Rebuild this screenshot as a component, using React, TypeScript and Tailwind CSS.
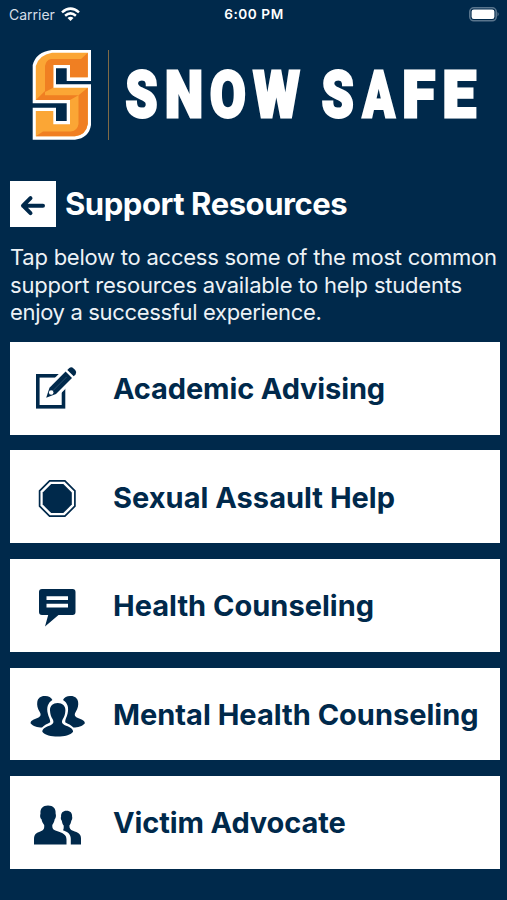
import React from 'react';

interface Resource {
  title: string;
  tracking: string;
  icon: React.ReactNode;
}

const NoteIcon = () => (
  <svg viewBox="0 1.5 70 50" className="h-[50px] w-[70px]">
    <rect x="17.8" y="13.3" width="25.7" height="31" fill="none" stroke="#00294b" strokeWidth="3.6" />
    <path d="M26 35 29 24 48 5 56 13 37 32Z" fill="#fff" stroke="#fff" strokeWidth="4" />
    <path d="M26.2 35.2 29.5 25.2 45.6 9.1 52 15.5 36 31.6Z" fill="#00294b" />
    <path d="M47.3 7.4 49.3 5.4Q51.6 3.9 53.6 6L55.2 7.6Q57.2 9.8 55.6 11.9L53.7 13.8Z" fill="#00294b" />
    <path d="M32.6 28.5 46.6 14.5" stroke="#335573" strokeWidth="0.8" />
    <circle cx="31.2" cy="30" r="2.3" fill="#fff" />
  </svg>
);

const OctagonIcon = () => (
  <svg viewBox="0 0 70 50" className="h-[50px] w-[70px]">
    <path d="M29.6 8.9H44.9L54.9 18.9V34.2L44.9 44.2H29.6L19.6 34.2V18.9Z" fill="#fff" stroke="#00294b" strokeWidth="1.7" />
    <path d="M31.2 12H43.3L51.8 20.5V32.6L43.3 41.1H31.2L22.7 32.6V20.5Z" fill="#00294b" />
  </svg>
);

const CommentIcon = () => (
  <svg viewBox="0 -.5 70 50" className="h-[50px] w-[70px]">
    <path d="M22 7.5H52.5Q55.5 7.5 55.5 10.5V30.5Q55.5 33.5 52.5 33.5H38.5L25 45 28.2 33.5H22Q19 33.5 19 30.5V10.5Q19 7.5 22 7.5Z" fill="#00294b" />
    <path d="M26.5 16.7H48M26.5 24.2H48" stroke="#fff" strokeWidth="3.8" />
  </svg>
);

const GroupIcon = () => (
  <svg viewBox="0 -2 70 50" className="h-[50px] w-[70px]">
    <path d="M24.5 5C28 4.7 31 6 32.4 9C27.5 12 26.5 17 27.8 22.5C28.5 26 30.4 28 30.2 31.2C27.5 33 24 33.8 22 36.6C17.5 36.3 13 35.3 10.5 32.2C10.8 28.8 15 28.5 18 26.8C21 25.3 21.2 23.5 19.6 20.8C17.5 17.4 16.8 14 17.3 10.8C18 7.2 20.5 5 24.5 5Z" fill="#00294b" />
    <path d="M50.9 5C47.4 4.7 44.4 6 43 9C47.9 12 48.9 17 47.6 22.5C46.9 26 45 28 45.2 31.2C47.9 33 51.4 33.8 53.4 36.6C57.9 36.3 62.4 35.3 64.9 32.2C64.6 28.8 60.4 28.5 57.4 26.8C54.4 25.3 54.2 23.5 55.8 20.8C57.9 17.4 58.6 14 58.1 10.8C57.4 7.2 54.9 5 50.9 5Z" fill="#00294b" />
    <path d="M37.7 12C33 12 29.7 15 30 19.5C30.2 23 30.9 25.5 32.7 28.2C34 30.5 33.7 32.5 31 34C26.5 36 22.3 37 22.3 40.8C25 44.4 31 45.5 37.7 45.5C44.4 45.5 50.4 44.4 53.1 40.8C53.1 37 48.9 36 44.4 34C41.7 32.5 41.4 30.5 42.7 28.2C44.5 25.5 45.2 23 45.4 19.5C45.7 15 42.4 12 37.7 12Z" fill="#00294b" />
  </svg>
);

const PairIcon = () => (
  <svg viewBox="0 -1.5 70 50" className="h-[50px] w-[70px]">
    <path d="M46.5 11.2C50.4 11.2 52.3 13.4 52.1 17C52.6 18.5 52 20.5 51.3 21.2C51 23.5 50 25 49.4 26C49.4 29 50.2 30.2 53 31.3C58 33.1 61 34.3 61 39V45H50.8V39.5C50.8 35 48.2 32.6 43 30.8C43.8 29.5 43.8 28 43.7 26C42.8 25 42 23 41.8 21.2C40.8 20 40.6 18.5 41.1 17C40.8 13.4 42.8 11.2 46.5 11.2Z" fill="#00294b" />
    <path d="M28 6C33.3 6 36 9 35.6 14C36.4 16 35.8 19 34.7 19.8C34.3 22.5 33.3 24 32.3 25.5C32.2 28.8 32.8 30.3 36.8 31.6C43 33.8 46.5 35 46.5 40V45H14V40C14 35 16 33.5 20.8 31.8C24 30.5 24.4 28.8 24.2 25.5C23 24 22 22.5 21.5 19.8C20 19 19.8 16 20.5 14C20 9 22.8 6 28 6Z" fill="#00294b" />
  </svg>
);

const resources: Resource[] = [
  { title: 'Academic Advising', tracking: 'tracking-[-0.13px]', icon: <NoteIcon /> },
  { title: 'Sexual Assault Help', tracking: 'tracking-[0.02px]', icon: <OctagonIcon /> },
  { title: 'Health Counseling', tracking: 'tracking-[0.01px]', icon: <CommentIcon /> },
  { title: 'Mental Health Counseling', tracking: 'tracking-[0px]', icon: <GroupIcon /> },
  { title: 'Victim Advocate', tracking: 'tracking-[-0.12px]', icon: <PairIcon /> },
];

// x and width are in the condensed space of the wordmark (see the scale below)
const wordmark = [
  { char: 'S', x: 6, width: 42 },
  { char: 'N', x: 58, width: 50 },
  { char: 'O', x: 117, width: 47 },
  { char: 'W', x: 174, width: 61 },
  { char: 'S', x: 264, width: 42 },
  { char: 'A', x: 318, width: 42 },
  { char: 'F', x: 370, width: 43 },
  { char: 'E', x: 423, width: 44 },
];

const StatusBar = () => (
  <div className="grid h-7 grid-cols-3 items-center pr-[7px] pl-[9px] text-[14px] text-white">
    <div className="flex items-center gap-[6px]">
      <span className="text-[#d5dee7]">Carrier</span>
      <svg viewBox="0 0 19 15" className="h-[15px] w-[19px]" fill="none" stroke="#fff" strokeWidth="2.5">
        <path d="M1 5.4Q9.5-2.2 18 5.4M4.1 8.7Q9.5 4.1 14.9 8.7" />
        <path d="M6.5 10.9Q9.5 8.5 12.5 10.9L9.5 14Z" fill="#fff" stroke="none" />
      </svg>
    </div>
    <span className="pt-px pr-px text-center text-[13.6px] font-semibold tracking-[0.55px]">6:00 PM</span>
    <svg viewBox="0 0 31 15" className="h-[15px] w-[31px] justify-self-end">
      <rect x=".8" y=".8" width="26.4" height="13" rx="4" fill="none" stroke="#59758d" strokeWidth="1.6" />
      <rect x="2.6" y="2.6" width="22.8" height="9.4" rx="2.2" fill="#fff" />
      <path d="M28.5 5Q31 7.2 28.5 9.5Z" fill="#59758d" />
    </svg>
  </div>
);

const Emblem = () => (
  <svg viewBox="0 0 60 92" className="h-[92px] w-[60px]">
    <path d="M19.7 1H59V32H34.7V19.3H24V35.3H59V76Q57 89 43 90.7H.7V58.7H24V72H34.7V54.3H.7V16Q4 3 19.7 1Z" fill="#fff" />
    <path d="M20 3.8H55.8V28.3H38V16H21.3V38.7H55.8V75Q54 86 43 87.3H3.8V62H21.3V75.3H38V51H3.8V17Q7 6 20 3.8Z" fill="#fba635" />
    {/* bevels */}
    <path d="M55.8 3.8V28.3H38V16H21.3V38.7L13 43V17Q14 11 19 10H49Z" fill="#f07f22" />
    <path d="M13 46.3H46.5L38 51H3.8L13 42Z" fill="#f07f22" />
    <path d="M55.8 38.7V75Q54 86 43 87.3H3.8L11 82.5H39Q45.5 81.5 46.5 75V46.3Z" fill="#f07f22" />
  </svg>
);

const App = (): JSX.Element => (
  <main className="h-[900px] w-[507px] overflow-hidden bg-[#00294b] font-['Inter','Liberation_Sans',sans-serif] text-white">
    <StatusBar />

    <header className="flex pt-[21px] pl-8">
      <Emblem />
      <div className="mt-px ml-4 h-[90px] w-px bg-[#806a45]" />
      <svg viewBox="0 0 370 92" className="ml-3 h-[92px] w-[370px] font-['Roboto',sans-serif] text-[65px] font-black" fill="#fff" stroke="#fff" strokeWidth="3">
        <g transform="scale(.76 1)">
          {wordmark.map(({ char, x, width }) => (
            <text key={x} x={x} y="68.5" textLength={width} lengthAdjust="spacingAndGlyphs">{char}</text>
          ))}
        </g>
      </svg>
    </header>

    <section className="px-[10px] pt-10">
      <div className="flex h-[46px] items-center gap-[9px]">
        <button aria-label="Back" className="flex size-[46px] items-center justify-center bg-white">
          <svg viewBox="0 0 46 46" className="size-[46px]" fill="none" stroke="#00294b" strokeWidth="4" strokeLinecap="round" strokeLinejoin="round">
            <path d="M33 24.7H13M20.5 17.2 13 24.7 20.5 32.2" />
          </svg>
        </button>
        <h1 className="pt-px text-[31px] font-bold tracking-[-0.44px] whitespace-nowrap">Support Resources</h1>
      </div>
      <p className="mt-[17px] text-[22px] leading-[27.5px] whitespace-nowrap text-[#edf2f6]">
        <span className="block tracking-[-0.24px]">Tap below to access some of the most common</span>
        <span className="block tracking-[-0.2px]">support resources available to help students</span>
        <span className="block tracking-[-0.34px]">enjoy a successful experience.</span>
      </p>
    </section>

    <div className="mt-[15.3px] flex flex-col gap-[15.8px] pr-[7px] pl-[10px]">
      {resources.map(resource => (
        <button key={resource.title} className="flex h-[92.8px] items-center gap-[23px] bg-white pt-px pl-[10px] text-[#00294b]">
          {resource.icon}
          <span className={`text-[29px] font-bold whitespace-nowrap ${resource.tracking}`}>{resource.title}</span>
        </button>
      ))}
    </div>
  </main>
);

export default App;
